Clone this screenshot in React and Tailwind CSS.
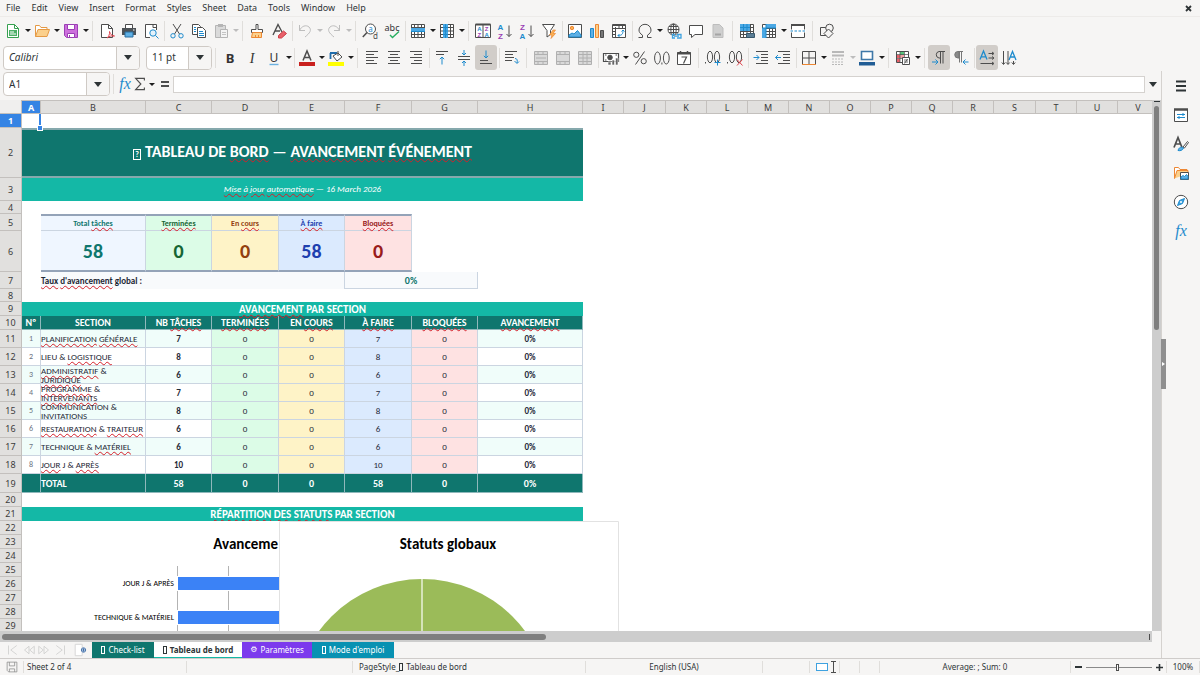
import clsx from "clsx";

const MENUS = ["File", "Edit", "View", "Insert", "Format", "Styles", "Sheet", "Data", "Tools", "Window", "Help"];

const COLUMNS = [
    { id: "A", w: "w-[19px]" },
    { id: "B", w: "w-[105px]" },
    { id: "C", w: "w-[66px]" },
    { id: "D", w: "w-[67px]" },
    { id: "E", w: "w-[66px]" },
    { id: "F", w: "w-[67px]" },
    { id: "G", w: "w-[66px]" },
    { id: "H", w: "w-[105px]" },
    { id: "I", w: "w-[41px]" },
    { id: "J", w: "w-[42px]" },
    { id: "K", w: "w-[41px]" },
    { id: "L", w: "w-[41px]" },
    { id: "M", w: "w-[41px]" },
    { id: "N", w: "w-[41px]" },
    { id: "O", w: "w-[41px]" },
    { id: "P", w: "w-[41px]" },
    { id: "Q", w: "w-[41px]" },
    { id: "R", w: "w-[41px]" },
    { id: "S", w: "w-[42px]" },
    { id: "T", w: "w-[41px]" },
    { id: "U", w: "w-[41px]" },
    { id: "V", w: "w-[41px]" },
];

// words between * are flagged by the spell checker
const SECTIONS = [
    { lines: ["*PLANIFICATION* *GÉNÉRALE*"], total: 7 },
    { lines: ["LIEU & *LOGISTIQUE*"], total: 8 },
    { lines: ["*ADMINISTRATIF* &", "*JURIDIQUE*"], total: 6 },
    { lines: ["*PROGRAMME* &", "*INTERVENANTS*"], total: 7 },
    { lines: ["COMMUNICATION &", "INVITATIONS"], total: 8 },
    { lines: ["*RESTAURATION* & *TRAITEUR*"], total: 6 },
    { lines: ["TECHNIQUE & *MATÉRIEL*"], total: 6 },
    { lines: ["*JOUR* J & *APRÈS*"], total: 10 },
];

const KPIS = [
    { label: "Total *tâches*", value: 58, cell: "bg-[#eff6ff] text-[#0f766e]" },
    { label: "*Terminées*", value: 0, cell: "bg-[#dcfce7] text-[#166534]" },
    { label: "En *cours*", value: 0, cell: "bg-[#fef3c7] text-[#92400e]" },
    { label: "*À faire*", value: 58, cell: "bg-[#dbeafe] text-[#1e40af]" },
    { label: "*Bloquées*", value: 0, cell: "bg-[#fee2e2] text-[#991b1b]" },
];

const HEADINGS = ["Nº", "SECTION", "NB *TÂCHES*", "*TERMINÉES*", "EN *COURS*", "*À FAIRE*", "*BLOQUÉES*", "*AVANCEMENT*"];

const Spell = ({ text }) =>
    text.split("*").map((part, i) =>
        i % 2 ? (
            <span key={i} className="underline decoration-[#d5202a] decoration-wavy decoration-1 underline-offset-1">
                {part}
            </span>
        ) : (
            part
        )
    );

const Tofu = () => <span aria-hidden="true" className="mr-[3px] inline-block h-2 w-1 border border-current" />;

const Icon = ({ children, className = "size-4" }) => (
    <svg viewBox="0 0 16 16" fill="none" stroke="#4d4d4d" className={clsx("overflow-visible", className)} aria-hidden="true">
        {children}
    </svg>
);

const BLUE = "#1e8bcd";
const ORANGE = "#ed8733";
const PURPLE = "#9b3fb5";
const lines = (rows) => rows.map(([x1, x2, y]) => `M${x1} ${y}H${x2}`).join("");
const letter = { stroke: "none", fontFamily: "Noto Sans, sans-serif", textAnchor: "middle" };
const tight = { ...letter, fontFamily: "Liberation Sans, sans-serif", fontWeight: 700 };

const ICONS = {
    new: (
        <>
            <path d="M2.5 1.5h7l4 4v9h-11z" fill="#fff" stroke="#35a04f" />
            <path d="M9.5 1.5v4h4" stroke="#35a04f" />
            <path d="M4 7h8v6H4z" fill="#4caf66" stroke="none" />
            <path d="M5 9h4M5 11h6" stroke="#fff" />
        </>
    ),
    open: (
        <>
            <path d="M1.5 13.5v-11h4l1.500 2h6v3" fill="#fff" stroke="#e59a45" />
            <path d="M1.500 13.500l2.500-7h11.500l-2.500 7z" fill="#fbd08c" stroke="#e59a45" />
        </>
    ),
    save: (
        <>
            <path d="M1.500 1.500h13v13h-11l-2-2z" fill="#cd6fdc" stroke="#9b3fb5" />
            <path d="M4.500 1.500h7v5h-7zM4.500 10.500h7v4h-7z" fill="#fff" stroke="#9b3fb5" />
            <path d="M6.500 12v2" stroke="#9b3fb5" />
        </>
    ),
    pdf: (
        <>
            <path d="M2.500 1.500h7l4 4v9h-11z" fill="#fff" />
            <path d="M9.500 1.500v4h4" />
            <path d="M8 15c1.500-1 3-4 2.500-6.500 1 3 2.500 4.500 5 4.500-3-.5-5 .2-7.500 2z" stroke="#e0454f" />
        </>
    ),
    print: (
        <>
            <path d="M4.500 1.500h7v4h-7z" fill="#fff" />
            <path d="M1 5h14v7H1z" fill="#4d5256" stroke="none" />
            <path d="M4 9h8v5H4z" fill="#5fb0e5" stroke="#2b6f9f" />
            <path d="M12 7h1.500" stroke="#fff" />
        </>
    ),
    preview: (
        <>
            <path d="M13.500 7V1.500h-11v13H7" fill="#fff" />
            <path d="M10 1.500v3h3.500" />
            <circle cx="10" cy="10" r="3.200" fill="#e4f2fb" stroke={BLUE} />
            <path d="M12.500 12.500l3 3" stroke={BLUE} />
        </>
    ),
    cut: (
        <>
            <path d="M4 1l6.500 10M12 1L5.500 11" />
            <circle cx="4" cy="12.800" r="2.200" stroke={BLUE} />
            <circle cx="12" cy="12.800" r="2.200" stroke={BLUE} />
        </>
    ),
    copy: (
        <>
            <path d="M1.500 1.500h6l2 2v8h-8z" fill="#fff" />
            <path d="M6.500 4.500h5l3 3v7h-8z" fill="#fff" />
            <path d="M8 8.500h4M8 10.500h5M8 12.500h5M3 4.500h2M3 6.500h2M3 8.500h2" stroke={BLUE} />
        </>
    ),
    paste: (
        <>
            <path d="M2.500 2.500h10v12h-10z" fill="#dadada" stroke="#b5b5b5" />
            <path d="M5 1h5v3H5z" fill="#b5b5b5" stroke="none" />
            <path d="M7.500 6.500h7v8h-7z" fill="#f4f4f4" stroke="#b5b5b5" />
            <path d="M9 9.500h4M9 11.500h4" stroke="#c4c4c4" />
        </>
    ),
    clone: (
        <>
            <path d="M7 1.500h2v5h4.500v3h-11v-3H7z" fill="#fff" />
            <path d="M3.500 9.500h9v5h-10z" fill="#fbd08c" stroke={ORANGE} />
            <path d="M6.500 12v2M9.500 12v2" stroke={ORANGE} />
        </>
    ),
    clear: (
        <>
            <path d="M2 12L7 1.500l4 7.500M4 8h5" strokeWidth="1.400" />
            <path d="M7.500 12.500l5-4.500 3 2.500-5 4.500h-3z" fill="#e8616a" stroke="#cf3c46" />
        </>
    ),
    undo: <path d="M2.500 2v5.500H8M2.500 7.500C4.500 3 9 1.500 12 4c3 3 1 6-4 10" stroke="#bdbdbd" />,
    redo: <path d="M13.500 2v5.500H8M13.500 7.500C11.500 3 7 1.500 4 4c-3 3-1 6 4 10" stroke="#bdbdbd" />,
    find: (
        <>
            <circle cx="8.500" cy="6" r="5" fill="#fff" />
            <path d="M5 9.500L.8 14" strokeWidth="1.500" />
            <text x="8.500" y="8.500" fontSize="8" fill={BLUE} {...letter}>a</text>
            <text x="13.500" y="15.500" fontSize="8" fill="#4d4d4d" {...letter}>d</text>
        </>
    ),
    spell: (
        <>
            <text x="8" y="8" fontSize="9" fill="#333" {...letter}>abc</text>
            <path d="M6 12l2.500 2.500L15 8.500" stroke="#27ae60" strokeWidth="1.400" />
        </>
    ),
    row: (
        <>
            <path d="M1.500 1.500h13v13h-13z" fill="#fff" />
            <path d="M1.500 4.500h13M1.500 11.500h13M4.500 1v14M8 1v14M11.500 1v14" />
            <path d="M1 5h14v4H1z" fill="#4ba8e4" stroke="none" />
            <path d="M1 8.500h14" stroke={BLUE} />
        </>
    ),
    col: (
        <>
            <path d="M1.500 1.500h13v13h-13z" fill="#fff" />
            <path d="M1 4.500h14M1 8h14M1 11.500h14M11.500 1v14" />
            <path d="M4 1h5v14H4z" fill="#4ba8e4" stroke="none" />
            <path d="M6.500 1v14M4 4.500h5M4 8h5M4 11.500h5" stroke={BLUE} />
        </>
    ),
    sort: (
        <>
            <path d="M.5 1.500h15v13H.5zM8 2v12" fill="#fff" />
            <path d="M.5 1.500h15" strokeWidth="2" />
            <text x="4.300" y="7.500" fontSize="6" fill={BLUE} {...tight}>A</text>
            <text x="4.300" y="14" fontSize="6" fill={PURPLE} {...tight}>Z</text>
            <text x="11.700" y="7.500" fontSize="6" fill={PURPLE} {...tight}>Z</text>
            <text x="11.700" y="14" fontSize="6" fill={BLUE} {...tight}>A</text>
        </>
    ),
    asc: (
        <>
            <text x="3.500" y="6.500" fontSize="8" fill={BLUE} {...tight}>A</text>
            <text x="3.500" y="15.500" fontSize="8" fill={PURPLE} {...tight}>Z</text>
            <path d="M12 2.500v11M9.500 11l2.500 2.500 2.500-2.500" />
        </>
    ),
    desc: (
        <>
            <text x="3.500" y="6.500" fontSize="8" fill={PURPLE} {...tight}>Z</text>
            <text x="3.500" y="15.500" fontSize="8" fill={BLUE} {...tight}>A</text>
            <path d="M12 2.500v11M9.500 11l2.500 2.500 2.500-2.500" />
        </>
    ),
    filter: (
        <>
            <path d="M1.500 1.500h12l-4 6v4l-3.500 2.500V7.500z" fill="#fff" />
            <path d="M12 7l-3.500 5h2.500l-1 3.500 4.500-5H12L14.500 7z" fill="#fbb254" stroke={ORANGE} strokeWidth=".7" />
        </>
    ),
    image: (
        <>
            <path d="M1.500 1.500h13v13h-13z" fill="#fff" />
            <circle cx="5" cy="5" r="1.700" fill="#fbb254" stroke={ORANGE} />
            <path d="M2 14v-2l3-2 2 1 3.500-3.500L14 12v2z" fill="#5fb0e5" stroke={BLUE} />
        </>
    ),
    chart: (
        <>
            <path d="M1.500 5.500h3v9h-3z" fill="#5fb0e5" stroke={BLUE} />
            <path d="M6.500 1.500h3v13h-3z" fill="#fbd08c" stroke={ORANGE} />
            <path d="M11.500 7.500h3v7h-3z" fill="#777" />
        </>
    ),
    pivot: (
        <>
            <path d="M1.500 1.500h13v13h-13z" fill="#fff" />
            <path d="M1 2.500h14M4.500 4v11M1 5.500h14M1 8.500h3M1 11.500h3M8 2v3M11.500 2v3" strokeWidth="1" />
            <path d="M7 12.500c4 0 5-1.500 5-5M10.500 8.500l1.500-1.500 1.500 1.500M8.500 11L7 12.500 8.500 14" stroke={BLUE} />
        </>
    ),
    omega: <path d="M1.500 14.500h4v-2.300C3 10.500 2 9 2 7a6 5.700 0 0112 0c0 2-1 3.500-3.500 5.200v2.300h4" />,
    link: (
        <>
            <circle cx="7.500" cy="6.500" r="5.500" fill="#fff" />
            <path d="M2 6.500h11M7.500 1v11M3 3.500h9M3 9.500h9" />
            <ellipse cx="7.500" cy="6.500" rx="2.700" ry="5.500" />
            <path d="M9 11.500H6.500v3.500H9M11 11.500h4v3.500h-4M8 13.200h5" stroke="#3fa2e0" strokeWidth="1.300" />
        </>
    ),
    comment: <path d="M1.500 2.500h13v9H7l-3.500 3v-3h-2z" fill="#fff" />,
    header: (
        <>
            <path d="M3 1.500h6.500l3.500 3.500v9.500H3z" fill="#cfcfcf" stroke="#bdbdbd" />
            <path d="M5 11.500h6" stroke="#a5a5a5" strokeWidth="2" />
        </>
    ),
    printArea: (
        <>
            <path d="M1.500 1.500h13v13h-13z" fill="#fff" />
            <path d="M1 8.500h14M1 11.500h14M4.500 1v14M8 1v14M11.500 1v14M1 4.500h14" />
            <path d="M1 1h10v7H1z" fill="#4ba8e4" stroke="none" />
            <path d="M1 4.500h10M4.500 1v7M8 1v7" stroke={BLUE} />
            <path d="M7.500 10.500h8v4h-8z" fill="#5a7d95" stroke="#38586c" />
        </>
    ),
    freeze: (
        <>
            <path d="M1.500 1.500h13v13h-13z" fill="#fff" />
            <path d="M1 5.500h14M1 8.500h14M1 11.500h14M8.500 1v14M11.500 1v14" />
            <path d="M1 5h4v10H1zM5 1h10v4H5z" fill="#4ba8e4" stroke="none" />
            <path d="M5 1v14M1 5h14" stroke={BLUE} />
        </>
    ),
    split: (
        <>
            <path d="M1.500 1.500h13v13h-13z" fill="#fff" />
            <path d="M1 2h14" strokeWidth="2" />
            <path d="M0 8h16" stroke="#fff" strokeWidth="3" />
            <path d="M.5 8h15" stroke={BLUE} strokeDasharray="2.500 1.500" />
        </>
    ),
    shapes: (
        <>
            <path d="M1.500 4.500h7v8h-7z" />
            <circle cx="10.500" cy="5" r="3.800" fill="#f6f5f4" />
            <path d="M9.500 6l4.500 4.500-4.500 4.500L5 10.500z" fill="#f6f5f4" />
        </>
    ),
    bold: <text x="8" y="12.500" fontSize="13" fontWeight="700" fill="#333" {...letter}>B</text>,
    italic: <text x="8" y="12.500" fontSize="14" fontStyle="italic" fill="#333" {...letter} fontFamily="Liberation Serif, serif">I</text>,
    underline: (
        <>
            <text x="8" y="11.500" fontSize="12" fill="#333" {...letter}>U</text>
            <path d="M3.500 14.500h9" stroke="#6bb0e0" strokeWidth="1.400" />
        </>
    ),
    fontColor: (
        <>
            <path d="M4 10.500L8 1l4 9.500M5.300 7.500h5.400" strokeWidth="1.500" />
            <path d="M0 12h16v4H0z" fill="#c9211e" stroke="none" />
        </>
    ),
    highlight: (
        <>
            <path d="M2 3h7M2.500 3v6" stroke="#1f6cab" strokeWidth="1.800" />
            <path d="M5 6l5-3 4 4-5 4z" fill="#fff" />
            <path d="M10 1v5" />
            <path d="M0 12h16v4H0z" fill="#ffff00" stroke="none" />
        </>
    ),
    left: <path d={lines([[2, 14, 1.5], [2, 10, 4.5], [2, 14, 7.5], [2, 10, 10.5], [2, 13, 13.5]])} />,
    center: <path d={lines([[2, 14, 1.5], [4, 12, 4.5], [2, 14, 7.5], [4, 12, 10.5], [2, 14, 13.5]])} />,
    right: <path d={lines([[2, 14, 1.5], [6, 14, 4.5], [2, 14, 7.5], [6, 14, 10.5], [3, 14, 13.5]])} />,
    top: (
        <>
            <path d="M2 1.500h12M2 4.500h8" />
            <path d="M8 14.500V7M5.800 9.200L8 7l2.200 2.200" stroke={BLUE} />
        </>
    ),
    middle: (
        <>
            <path d="M2 6.500h12M2 9.500h12" />
            <path d="M8 0v5M6 3l2 2 2-2M8 16v-5M6 13l2-2 2 2" stroke={BLUE} />
        </>
    ),
    bottom: (
        <>
            <path d="M2 10.500h8M2 13.500h12" />
            <path d="M8 .5V8M5.800 5.800L8 8l2.200-2.200" stroke={BLUE} />
        </>
    ),
    wrap: (
        <>
            <path d="M1 1.500h12M1 4.500h8M1 7.500h9M1 10.500h7" />
            <path d="M11 8.500c2.500 0 2.500 2 2 4.500M10.500 11l2.500 2.500 2-2" stroke={BLUE} />
        </>
    ),
    merge: (
        <>
            <path d="M1.500 1.500h13v13h-13z" fill="#d9d9d9" stroke="#b0b0b0" />
            <path d="M1 4.500h14M1 11.500h14M5 1v3M10 1v3M5 12v3M10 12v3M3 8h10" stroke="#b0b0b0" />
        </>
    ),
    mergeCenter: (
        <>
            <path d="M1.500 1.500h13v13h-13z" fill="#d9d9d9" stroke="#b0b0b0" />
            <path d="M1 4.500h14M1 11.500h14M5 1v3M10 1v3M5 12v3M10 12v3" stroke="#b0b0b0" />
        </>
    ),
    unmerge: (
        <>
            <path d="M1.500 1.500h13v13h-13z" fill="#d9d9d9" stroke="#b0b0b0" />
            <path d="M1 4.500h14M1 11.500h14M6 1v14M10 1v14M1 8h14" stroke="#b0b0b0" />
        </>
    ),
    currency: (
        <>
            <path d="M.5 3.500h15v8H.5z" fill="#fff" strokeWidth="1.200" />
            <circle cx="7" cy="7.500" r="2.300" fill="#4d4d4d" />
            <path d="M2 5h1.500M12.500 5H14M2 10h1.500" />
            <path d="M5 12h3v3H5zM9 10h2.500v5H9zM12.500 8H15v7h-2.500z" fill="#666" stroke="#fff" strokeWidth=".6" />
        </>
    ),
    percent: (
        <>
            <circle cx="4.300" cy="4.800" r="2.600" />
            <circle cx="11.700" cy="11.200" r="2.600" />
            <path d="M12.500 1.500l-9 13" />
        </>
    ),
    number: (
        <>
            <ellipse cx="3.500" cy="8" rx="2.900" ry="6" />
            <ellipse cx="12.300" cy="8" rx="2.900" ry="6" />
            <path d="M7.900 12.500v2" />
        </>
    ),
    date: (
        <>
            <path d="M1.500 2.500h13v12h-13z" fill="#fff" />
            <path d="M1 3.500h14" strokeWidth="2" />
            <path d="M4.500 1v3M11.500 1v3" strokeWidth="1.500" />
            <path d="M5.500 7h5l-3 6.500" strokeWidth="1.200" />
        </>
    ),
    addDecimal: (
        <>
            <ellipse cx="5" cy="7" rx="2.600" ry="5.700" />
            <ellipse cx="12" cy="7" rx="2.600" ry="5.700" />
            <path d="M.5 12v1.500" />
            <path d="M9.500 12.500h6M12.500 9.500v6" stroke={BLUE} />
        </>
    ),
    delDecimal: (
        <>
            <ellipse cx="5" cy="7" rx="2.600" ry="5.700" />
            <ellipse cx="12" cy="7" rx="2.600" ry="5.700" />
            <path d="M.5 12v1.500" />
            <path d="M10 9.500l5.500 6M15.500 9.500l-5.500 6" stroke="#e0454f" />
        </>
    ),
    indent: (
        <>
            <path d="M3 1.500h12M8 4.500h7M8 7.500h7M8 10.500h7M3 13.500h12" />
            <path d="M.5 7.500H6M3.500 5L6 7.500 3.500 10" stroke={BLUE} />
        </>
    ),
    outdent: (
        <>
            <path d="M3 1.500h12M8 4.500h7M8 7.500h7M8 10.500h7M3 13.500h12" />
            <path d="M.5 7.500H6M3 5L.5 7.500 3 10" stroke={BLUE} />
        </>
    ),
    borders: (
        <>
            <path d="M1.500 1.500h13v13M1.500 1.500v13M8 1.500v13M1.500 8h13" />
            <path d="M1 14.500h14" stroke={ORANGE} />
        </>
    ),
    borderStyle: (
        <>
            <path d="M2 2h12M2 5.500h12" stroke="#b8b8b8" strokeWidth="2" />
            <path d="M2 9h12M2 12h12M2 14.500h12" stroke="#b8b8b8" strokeDasharray="2 1" />
        </>
    ),
    borderColor: (
        <>
            <path d="M2.500 1.500h11v8h-11z" fill="#fff" stroke="#3f78a8" strokeWidth="1.600" />
            <path d="M0 12h16v3.500H0z" fill="#215d95" stroke="none" />
        </>
    ),
    conditional: (
        <>
            <path d="M1.500 1.500h12v11h-12z" fill="#fff" />
            <path d="M2 5h3v3H2zM2 9h3v3H2z" fill="#e8616a" stroke="none" />
            <path d="M5 2h4v3H5z" fill="#58c27a" stroke="none" />
            <path d="M5 5h4v3H5z" fill="#f3a2a7" stroke="none" />
            <path d="M1 4.500h13M1 8.500h13M5 1v12M9.500 1v12" strokeWidth=".7" />
            <path d="M7.500 7.500h7v7h-7z" fill="#fff" />
            <path d="M9 10h4M9 12h4M12.500 9l-3 4.500" strokeWidth=".8" />
        </>
    ),
    ltr: (
        <>
            <path d="M14 1.500H8a3.300 3.300 0 000 6.500h1.500M9.500 1.500v12M12 1.500v12" />
            <path d="M1 12h6M4.500 9.500L7 12l-2.500 2.500" stroke={BLUE} />
        </>
    ),
    rtl: (
        <>
            <path d="M6 1.500H5A3.200 3.200 0 005 8h1z" fill="#8a8a8a" stroke="#777" />
            <path d="M6.500 1v11.500M8.500 1v11.500M5 1.500h5" stroke="#777" />
            <path d="M15.500 12H10M12.500 9.500L10 12l2.500 2.500" stroke={BLUE} />
        </>
    ),
    textLtr: (
        <>
            <path d="M1 9.500L4.500 1 8 9.500M2.300 6.800h4.500" stroke={BLUE} strokeWidth="1.300" />
            <path d="M9.500 3.500h5M9.500 8h5M1.500 13.500h13M13 2l2 1.500L13 5M13 6.500L15 8l-2 1.500M13 12l2 1.500-2 1.500" />
        </>
    ),
    textTtb: (
        <>
            <path d="M8 10l3.500-8.500L15 10M9.300 7h4.500" stroke={BLUE} strokeWidth="1.300" />
            <path d="M2.500 1v13M7 1v13M12.500 11v3M.8 12.500l1.700 2 1.700-2M5.300 12.500l1.700 2 1.700-2M10.800 12.500l1.700 2 1.700-2" />
        </>
    ),
};

const ARROW = "h-0 w-0 border-x-[3px] border-t-[3px] border-x-transparent";

const Tool = ({ name, label, arrow, active, off }) => (
    <div className="flex shrink-0 items-center">
        <button aria-label={label} aria-pressed={active} className={clsx("flex h-[25px] w-[22px] items-center justify-center rounded-[3px]", active && "bg-[#d1cdc9]")}>
            <Icon>{ICONS[name]}</Icon>
        </button>
        {arrow && (
            <button aria-label={`${label} options`} className="flex h-[25px] w-[7px] items-center justify-center">
                <span className={clsx(ARROW, off ? "border-t-[#bdbdbd]" : "border-t-[#1d1d1d]")} />
            </button>
        )}
    </div>
);

const Sep = ({ wide }) => (
    <div className={clsx("flex h-5 shrink-0 justify-center", wide ? "w-[7px]" : "w-1")}>
        <div className="h-full w-px bg-[#e0dedb]" />
    </div>
);

const Combo = ({ label, value, width, italic }) => (
    <div className={clsx("flex h-6 shrink-0 items-stretch overflow-hidden rounded-[4px] border border-[#cfcac5] bg-white", width)}>
        <input aria-label={label} defaultValue={value} className={clsx("w-0 min-w-0 flex-1 pl-[5px] text-[10px] text-[#2e3436] outline-none", italic && "italic")} />
        <button aria-label={`${label} list`} className="flex w-[23px] items-center justify-center border-l border-[#cfcac5] bg-[#f6f5f4]">
            <span className="h-0 w-0 border-x-4 border-t-[5px] border-x-transparent border-t-[#2e3436]" />
        </button>
    </div>
);

const StandardBar = () => (
    <div role="toolbar" aria-label="Standard" className="flex h-[27px] items-center pl-0.5">
        <Tool name="new" label="New" arrow />
        <Tool name="open" label="Open" arrow />
        <Tool name="save" label="Save" arrow />
        <Sep wide />
        <Tool name="pdf" label="Export as PDF" />
        <Tool name="print" label="Print" />
        <Tool name="preview" label="Print preview" />
        <Sep />
        <Tool name="cut" label="Cut" />
        <Tool name="copy" label="Copy" />
        <Tool name="paste" label="Paste" arrow off />
        <Sep wide />
        <Tool name="clone" label="Clone formatting" />
        <Tool name="clear" label="Clear formatting" />
        <Sep />
        <Tool name="undo" label="Undo" arrow off />
        <Tool name="redo" label="Redo" arrow off />
        <Sep wide />
        <Tool name="find" label="Find and replace" />
        <Tool name="spell" label="Spelling" />
        <Sep />
        <Tool name="row" label="Row" arrow />
        <Tool name="col" label="Column" arrow />
        <Sep wide />
        <Tool name="sort" label="Sort" />
        <Tool name="asc" label="Sort ascending" />
        <Tool name="desc" label="Sort descending" />
        <Tool name="filter" label="AutoFilter" />
        <Sep />
        <Tool name="image" label="Insert image" />
        <Tool name="chart" label="Insert chart" />
        <Tool name="pivot" label="Pivot table" />
        <Sep />
        <Tool name="omega" label="Special character" arrow />
        <Tool name="link" label="Hyperlink" />
        <Tool name="comment" label="Comment" />
        <Tool name="header" label="Headers and footers" />
        <Sep wide />
        <Tool name="printArea" label="Print area" />
        <Tool name="freeze" label="Freeze panes" arrow />
        <Tool name="split" label="Split window" />
        <Sep wide />
        <Tool name="shapes" label="Draw functions" />
    </div>
);

const FormattingBar = () => (
    <div role="toolbar" aria-label="Formatting" className="flex h-[27px] items-center pl-[3px]">
        <Combo label="Font name" value="Calibri" width="w-[137px]" italic />
        <div className="w-1.5" />
        <Combo label="Font size" value="11 pt" width="w-[66px]" />
        <Sep wide />
        <Tool name="bold" label="Bold" />
        <Tool name="italic" label="Italic" />
        <Tool name="underline" label="Underline" arrow />
        <Sep />
        <Tool name="fontColor" label="Font color" arrow />
        <Tool name="highlight" label="Background color" arrow />
        <Sep wide />
        <Tool name="left" label="Align left" />
        <Tool name="center" label="Align center" />
        <Tool name="right" label="Align right" />
        <Sep />
        <Tool name="top" label="Align top" />
        <Tool name="middle" label="Center vertically" />
        <Tool name="bottom" label="Align bottom" active />
        <Sep />
        <Tool name="wrap" label="Wrap text" />
        <Sep wide />
        <Tool name="merge" label="Merge and center" />
        <Tool name="mergeCenter" label="Merge cells" />
        <Tool name="unmerge" label="Unmerge cells" />
        <Sep />
        <Tool name="currency" label="Currency" arrow />
        <Tool name="percent" label="Percent" />
        <Tool name="number" label="Number" />
        <Tool name="date" label="Date" />
        <Sep wide />
        <Tool name="addDecimal" label="Add decimal place" />
        <Tool name="delDecimal" label="Delete decimal place" />
        <Sep />
        <Tool name="indent" label="Increase indent" />
        <Tool name="outdent" label="Decrease indent" />
        <Sep />
        <Tool name="borders" label="Borders" arrow />
        <Tool name="borderStyle" label="Border style" arrow off />
        <Tool name="borderColor" label="Border color" arrow />
        <Sep wide />
        <Tool name="conditional" label="Conditional formatting" arrow />
        <Sep wide />
        <Tool name="ltr" label="Left to right" active />
        <Tool name="rtl" label="Right to left" />
        <Sep />
        <Tool name="textLtr" label="Text direction horizontal" active />
        <Tool name="textTtb" label="Text direction vertical" />
    </div>
);

const Fx = () => <span className="font-['Liberation_Serif',serif] text-base leading-4 text-[#1e8bcd] italic">fx</span>;

const FormulaBar = () => (
    <div className="flex h-[29px] items-center pb-[3px] pl-[3px]">
        <Combo label="Name box" value="A1" width="w-[107px]" />
        <Sep wide />
        <button aria-label="Function wizard" className="flex w-4 justify-center">
            <Fx />
        </button>
        <button aria-label="Select function" className="flex w-[22px] items-center justify-between text-[#4d4d4d]">
            <Icon className="size-[14px]">
                <path d="M13 4V1.500H3L9 8l-6 6.500h10V12" strokeWidth="1.300" />
            </Icon>
            <span className={clsx(ARROW, "border-t-[#1d1d1d]")} />
        </button>
        <button aria-label="Formula" className="ml-0.5 flex h-4 w-4 items-center justify-center">
            <span className="h-1.5 w-2 border-y-2 border-[#4d4d4d]" />
        </button>
        <input aria-label="Input line" className="h-[17px] min-w-0 flex-1 border border-[#d5d2cf] bg-white px-1 text-[10px] outline-none" />
        <button aria-label="Expand formula bar" className="flex w-4 justify-center">
            <span className="h-0 w-0 border-x-4 border-t-[5px] border-x-transparent border-t-[#2e3436]" />
        </button>
    </div>
);

const Row = ({ n, h, children, rest = 14 }) => (
    <tr className={h}>
        <th scope="row" className={clsx("border-r border-b border-[#c3c0bd] p-0 text-center font-['Noto_Sans',sans-serif] text-[9px] leading-[9px]", n === 1 ? "bg-[#3584e4] font-bold text-white" : "bg-[#e1e0de] font-normal text-[#3c3c3c]")}>
            {n}
        </th>
        {children}
        <td colSpan={rest} className="p-0" />
    </tr>
);

const line = "border-r border-b border-[#cbd5e1]";
const darkLine = "border-r border-b border-[#8fb8bb]";

const BarChart = () => (
    <svg width="257" height="111" className="shrink-0 bg-white font-['Carlito','Lato',sans-serif]" role="img" aria-label="Avancement">
        <path d="M155.500 45v66M206.500 45v66" stroke="#b3b3b3" />
        <path d="M155 55h102v15H155zM155 89h102v15H155z" fill="#fff" />
        <path d="M156 56h101v13H156zM156 90h101v13H156z" fill="#3b82f6" />
        <text x="256" y="28" textAnchor="end" fontSize="15" fontWeight="700">Avanceme</text>
        <text x="152" y="65" textAnchor="end" fontSize="8">JOUR J &amp; APRÈS</text>
        <text x="152" y="99" textAnchor="end" fontSize="8">TECHNIQUE &amp; MATÉRIEL</text>
    </svg>
);

const PieChart = () => (
    <svg width="340" height="111" className="shrink-0 bg-white font-['Carlito','Lato',sans-serif]" role="img" aria-label="Statuts globaux">
        <path d="M.5 111V.5h339V111" fill="none" stroke="#e2e2e2" />
        <circle cx="143" cy="186" r="128" fill="#9bbb59" />
        <path d="M143 58v60" stroke="#e9f1da" strokeWidth="1.500" />
        <text x="169" y="28" textAnchor="middle" fontSize="15" fontWeight="700">Statuts globaux</text>
    </svg>
);

const Sheet = () => (
    <div className="relative min-h-0 min-w-0 flex-1 overflow-hidden bg-white">
        <table className="w-[1159px] table-fixed border-separate border-spacing-0 font-['Carlito','Lato',sans-serif] text-[9px] leading-[9px] text-[#1f2937]">
            <colgroup>
                <col className="w-[22px]" />
                {COLUMNS.map((c) => (
                    <col key={c.id} className={c.w} />
                ))}
            </colgroup>
            <thead>
                <tr className="h-[14px] font-['Noto_Sans',sans-serif]">
                    <td className="border-r border-b border-[#c3c0bd] bg-[#f0efee] p-0" />
                    {COLUMNS.map((c) => (
                        <th key={c.id} scope="col" className={clsx("border-t border-r border-b border-[#c3c0bd] p-0 text-center text-[9px] leading-[9px]", c.id === "A" ? "bg-[#3584e4] font-bold text-white" : "bg-[#e1e0de] font-normal text-[#3c3c3c]")}>
                            {c.id}
                        </th>
                    ))}
                </tr>
            </thead>
            <tbody>
                <Row n={1} h="h-[14px]" rest={21}>
                    <td className="relative border-r-2 border-[#3584e4] p-0">
                        <span className="absolute -right-[3px] -bottom-0.5 z-10 size-1 bg-[#3584e4] outline-1 outline-white" />
                    </td>
                </Row>
                <Row n={2} h="h-[50px]">
                    <td colSpan={8} className="border-t-2 border-b-2 border-[#86a9ad] bg-[#0f766e] p-0 pb-0.5 text-center text-base leading-5 font-bold text-white">
                        <span className="mr-1 inline-block h-[11px] w-2 border border-current align-baseline text-[8px] leading-[9px]">?</span>
                        <Spell text="TABLEAU DE *BORD* — *AVANCEMENT* *ÉVÉNEMENT*" />
                    </td>
                </Row>
                <Row n={3} h="h-[23px]">
                    <td colSpan={8} className="bg-[#14b8a6] p-0 pb-0.5 text-center text-white italic">
                        <Spell text="*Mise* *à* *jour* *automatique* — 16 March 2026" />
                    </td>
                </Row>
                <Row n={4} h="h-[13px]" rest={22} />
                <Row n={5} h="h-[17px]" rest={16}>
                    <td className="p-0" />
                    {KPIS.map((k) => (
                        <th key={k.label} scope="col" className={clsx("border-t-2 border-r border-b border-t-[#94a3b8] border-r-[#cbd5e1] border-b-[#cbd5e1] p-0 text-center text-[8px] font-bold", k.cell)}>
                            <Spell text={k.label} />
                        </th>
                    ))}
                </Row>
                <Row n={6} h="h-[41px]" rest={16}>
                    <td className="p-0" />
                    {KPIS.map((k) => (
                        <td key={k.label} className={clsx("border-r border-b-2 border-r-[#cbd5e1] border-b-[#94a3b8] p-0 text-center text-xl leading-5 font-bold", k.cell)}>
                            {k.value}
                        </td>
                    ))}
                </Row>
                <Row n={7} h="h-[17px]" rest={15}>
                    <td className="p-0" />
                    <th scope="row" colSpan={4} className="border-r border-[#cbd5e1] bg-[#f8fafc] p-0 text-left font-bold">
                        <Spell text="*Taux* *d'avancement* global :" />
                    </th>
                    <td colSpan={2} className={clsx("bg-[#f8fafc] p-0 text-center text-[10px] font-bold text-[#0f766e]", line)}>
                        0%
                    </td>
                </Row>
                <Row n={8} h="h-[13px]" rest={22} />
                <Row n={9} h="h-[14px]">
                    <td colSpan={8} className="bg-[#14b8a6] p-0 text-center text-[11px] font-bold text-white">
                        <Spell text="*AVANCEMENT* PAR SECTION" />
                    </td>
                </Row>
                <Row n={10} h="h-[14px]">
                    {HEADINGS.map((t) => (
                        <th key={t} scope="col" className={clsx("bg-[#0f766e] p-0 text-center text-[10px] font-bold text-white", darkLine)}>
                            <Spell text={t} />
                        </th>
                    ))}
                </Row>
                {SECTIONS.map((s, i) => {
                    const zebra = i % 2 ? "bg-white" : "bg-[#f0fdfa]";
                    return (
                        <Row key={i} n={11 + i} h="h-[18px]">
                            <td className={clsx("p-0 text-center text-[8px] text-[#6b7280]", zebra, line)}>{i + 1}</td>
                            <th scope="row" className={clsx("p-0 text-left font-normal", zebra, line)}>
                                <div className="flex h-[17px] flex-col justify-center whitespace-nowrap">
                                    {s.lines.map((l) => (
                                        <span key={l}>
                                            <Spell text={l} />
                                        </span>
                                    ))}
                                </div>
                            </th>
                            <td className={clsx("p-0 text-center font-bold", zebra, line)}>{s.total}</td>
                            <td className={clsx("bg-[#dcfce7] p-0 text-center", line)}>0</td>
                            <td className={clsx("bg-[#fef3c7] p-0 text-center", line)}>0</td>
                            <td className={clsx("bg-[#dbeafe] p-0 text-center", line)}>{s.total}</td>
                            <td className={clsx("bg-[#fee2e2] p-0 text-center", line)}>0</td>
                            <td className={clsx("p-0 text-center font-bold", zebra, line)}>0%</td>
                        </Row>
                    );
                })}
                <Row n={19} h="h-[19px]">
                    {["", "TOTAL", 58, 0, 0, 58, 0, "0%"].map((v, i) => (
                        <td key={i} className={clsx("bg-[#0f766e] p-0 text-[10px] font-bold text-white", darkLine, i === 1 ? "text-left" : "text-center")}>
                            {v}
                        </td>
                    ))}
                </Row>
                <Row n={20} h="h-[14px]" rest={22} />
                <Row n={21} h="h-[14px]">
                    <td colSpan={8} className="bg-[#14b8a6] p-0 text-center text-[11px] font-bold text-white">
                        <Spell text="*RÉPARTITION* *DES* *STATUTS* PAR SECTION" />
                    </td>
                </Row>
                {[22, 23, 24, 25, 26, 27, 28, 29].map((n) => (
                    <Row key={n} n={n} h={n === 29 ? "h-[13px]" : "h-[14px]"} rest={22} />
                ))}
            </tbody>
        </table>
        <div className="absolute top-[421px] left-[22px] flex">
            <BarChart />
            <PieChart />
        </div>
    </div>
);

const TABS = [
    { name: "Check-list", cls: "bg-[#0f766e] text-white", w: "w-[62px]" },
    { name: "Tableau de bord", cls: "border-b border-[#14b8a6] bg-white font-bold text-[#2e3436]", w: "w-[88px]" },
    { name: "Paramètres", cls: "bg-[#7c3aed] text-white", w: "w-[70px]", gear: true },
    { name: "Mode d'emploi", cls: "bg-[#0891b2] text-white", w: "w-[82px]" },
];

const TabBar = () => (
    <div className="flex h-4 items-stretch pl-1.5">
        <div className="flex w-[61px] items-center justify-between">
            {["M2 2v12M13 2L5 8l8 6", "M8 3L2 8l6 5zM15 3L9 8l6 5z", "M1 3l6 5-6 5zM8 3l6 5-6 5z", "M14 2v12M3 2l8 6-8 6"].map((d) => (
                <button key={d} aria-label="Scroll sheets">
                    <Icon className="h-3 w-[14px]">
                        <path d={d} stroke="#c9c9c9" />
                    </Icon>
                </button>
            ))}
        </div>
        <button aria-label="Add sheet" className="ml-1.5 flex w-[19px] items-center">
            <Icon className="size-[14px]">
                <path d="M2.500 1.500h8v13h-8z" fill="#fff" stroke="#d3d3d3" />
                <circle cx="12" cy="8" r="2.500" fill="#fff" stroke="#3465a4" />
                <path d="M10 8h4M12 6v4" stroke="#3465a4" />
            </Icon>
        </button>
        {TABS.map((t) => (
            <button key={t.name} className={clsx("flex items-center justify-center text-[8px] leading-3 whitespace-nowrap", t.w, t.cls)}>
                {t.gear ? <span className="mr-[3px] font-['DejaVu_Sans',sans-serif]">⚙</span> : <Tofu />}
                {t.name}
            </button>
        ))}
    </div>
);

const Sidebar = () => (
    <aside className="relative flex w-[39px] shrink-0 flex-col items-center border-l border-[#d5d2cf]">
        {[
            ["Sidebar settings", <path key="p" d="M3 3.500h10M3 8h10M3 12.500h10" stroke="#2e3436" strokeWidth="1.800" />],
            [
                "Properties",
                <g key="p">
                    <path d="M1.500 2.500h13v12h-13z" fill="#fff" />
                    <path d="M1 2.500h14" strokeWidth="2.500" />
                    <path d="M4 7.500h8M4 10.500h8M10 6v3M6 9v3" stroke={BLUE} />
                </g>,
            ],
            [
                "Styles",
                <g key="p">
                    <path d="M1 11.500L5 1.500l4 10M2.500 8h5" strokeWidth="1.700" />
                    <path d="M14.500 5.500L10 11l1.500 1 4-5.500z" fill="#fff" />
                    <path d="M5 14.500c1-3.500 3.500-4 5.500-2.500-1 2.500-3 3-5.500 2.500z" fill="#5fb0e5" stroke={BLUE} />
                </g>,
            ],
            [
                "Gallery",
                <g key="p">
                    <path d="M1.500 13.500v-11h4l1.500 2h7v3" fill="#fff" stroke={ORANGE} />
                    <path d="M1.500 13.500l2.500-8h11v3" fill="#fbd08c" stroke={ORANGE} />
                    <path d="M7.500 7.500h8v7h-8z" fill="#fff" />
                    <path d="M8 14v-2l2-1.500 1.500 1 2-2 1.500 2V14z" fill="#5fb0e5" stroke={BLUE} />
                </g>,
            ],
            [
                "Navigator",
                <g key="p">
                    <circle cx="8" cy="8" r="6.700" fill="#fff" />
                    <path d="M11.500 4.500L9.500 9.500l-5 2 2-5z" fill="#3fa2e0" stroke={BLUE} />
                    <circle cx="8" cy="8" r="1" fill="#fff" stroke="none" />
                </g>,
            ],
            ["Functions", null],
        ].map(([label, art]) => (
            <button key={label} aria-label={label} className="flex h-[29px] w-7 items-center justify-center">
                {art ? <Icon>{art}</Icon> : <Fx />}
            </button>
        ))}
        <button aria-label="Hide sidebar" className="absolute top-[268px] -left-px flex h-[50px] w-[5px] items-center justify-center bg-[#8f8f8f]">
            <span className="h-0 w-0 border-y-2 border-l-[3px] border-y-transparent border-l-white" />
        </button>
    </aside>
);

const StatusBar = () => (
    <footer className="grid h-[17px] shrink-0 grid-cols-[24px_163fr_166fr_233fr_177fr_47px_30px_20px_20px_191fr_96px_33px] items-center border-t border-[#cfccca] text-[8px] leading-3 whitespace-nowrap text-[#2e3436] *:flex *:h-3 *:items-center *:border-r *:border-[#e0dedb]">
        <div className="justify-center border-r-0">
            <Icon className="size-3">
                <path d="M1.500 1.500h13v13h-11l-2-2zM4.500 1.500v5h7v-5M4.500 14.500v-4h7v4" stroke="#8a8a8a" />
            </Icon>
        </div>
        <div className="pl-[3px]">Sheet 2 of 4</div>
        <div />
        <div className="pl-1.5">
            PageStyle_
            <Tofu />
            Tableau de bord
        </div>
        <div className="justify-center">English (USA)</div>
        <div />
        <div className="gap-0.5 pl-1.5">
            <span className="h-2 w-3 border border-[#3fa2e0] bg-white" />
            <svg viewBox="0 0 7 12" className="h-3 w-[7px]" fill="none" stroke="#4d4d4d" aria-hidden="true">
                <path d="M1 .5h5M3.500 .5v11M1 11.500h5" />
            </svg>
        </div>
        <div />
        <div />
        <div className="justify-center">Average: ; Sum: 0</div>
        <div className="justify-center gap-1">
            <button aria-label="Zoom out" className="h-0.5 w-[7px] bg-[#2e3436]" />
            <input
                type="range"
                aria-label="Zoom"
                defaultValue={48}
                className="h-3 w-[66px] appearance-none bg-transparent [&::-webkit-slider-runnable-track]:h-px [&::-webkit-slider-runnable-track]:bg-[#8a8a8a] [&::-webkit-slider-thumb]:-mt-[3px] [&::-webkit-slider-thumb]:h-[7px] [&::-webkit-slider-thumb]:w-[3px] [&::-webkit-slider-thumb]:appearance-none [&::-webkit-slider-thumb]:border [&::-webkit-slider-thumb]:border-[#4d4d4d] [&::-webkit-slider-thumb]:bg-white"
            />
            <button aria-label="Zoom in">
                <svg viewBox="0 0 7 7" className="size-[7px]" stroke="#2e3436" strokeWidth="1.600" aria-hidden="true">
                    <path d="M3.500 0v7M0 3.500h7" />
                </svg>
            </button>
        </div>
        <div className="justify-center border-r-0">100%</div>
    </footer>
);

const App = () => (
    <div className="flex h-screen flex-col overflow-hidden bg-[#f6f5f4] font-['Noto_Sans',sans-serif] text-[#2e3436]">
        <nav className="flex h-[17px] shrink-0 items-center gap-px border-b border-[#edebe9] pl-px">
            {MENUS.map((m) => (
                <button key={m} className="px-[5px] text-[9px] leading-4">
                    {m}
                </button>
            ))}
            <button aria-label="Close document" className="mr-2 ml-auto">
                <svg viewBox="0 0 7 7" className="size-[7px]" stroke="#2e3436" strokeWidth="1.800" aria-hidden="true">
                    <path d="M1 1l5 5M6 1L1 6" />
                </svg>
            </button>
        </nav>
        <StandardBar />
        <FormattingBar />
        <div className="flex min-h-0 flex-1">
            <main className="flex min-w-0 flex-1 flex-col">
                <FormulaBar />
                <div className="flex min-h-0 flex-1">
                    <Sheet />
                    <div className="flex w-[9px] shrink-0 flex-col items-center bg-[#cdcdcd]">
                        <div className="mt-px mb-1 h-px w-1.5 bg-[#2e3436]" />
                        <div className="h-[224px] w-[5px] rounded-full bg-[#7f7f7f]" />
                    </div>
                </div>
                <div className="mr-[9px] flex h-[11px] shrink-0 items-center justify-between bg-[#cdcdcd] pr-0.5 pl-0.5">
                    <div className="h-1.5 w-[544px] rounded-full bg-[#7f7f7f]" />
                    <div className="h-1.5 w-px bg-[#4d4d4d]" />
                </div>
                <TabBar />
            </main>
            <Sidebar />
        </div>
        <StatusBar />
    </div>
);

export default App;
